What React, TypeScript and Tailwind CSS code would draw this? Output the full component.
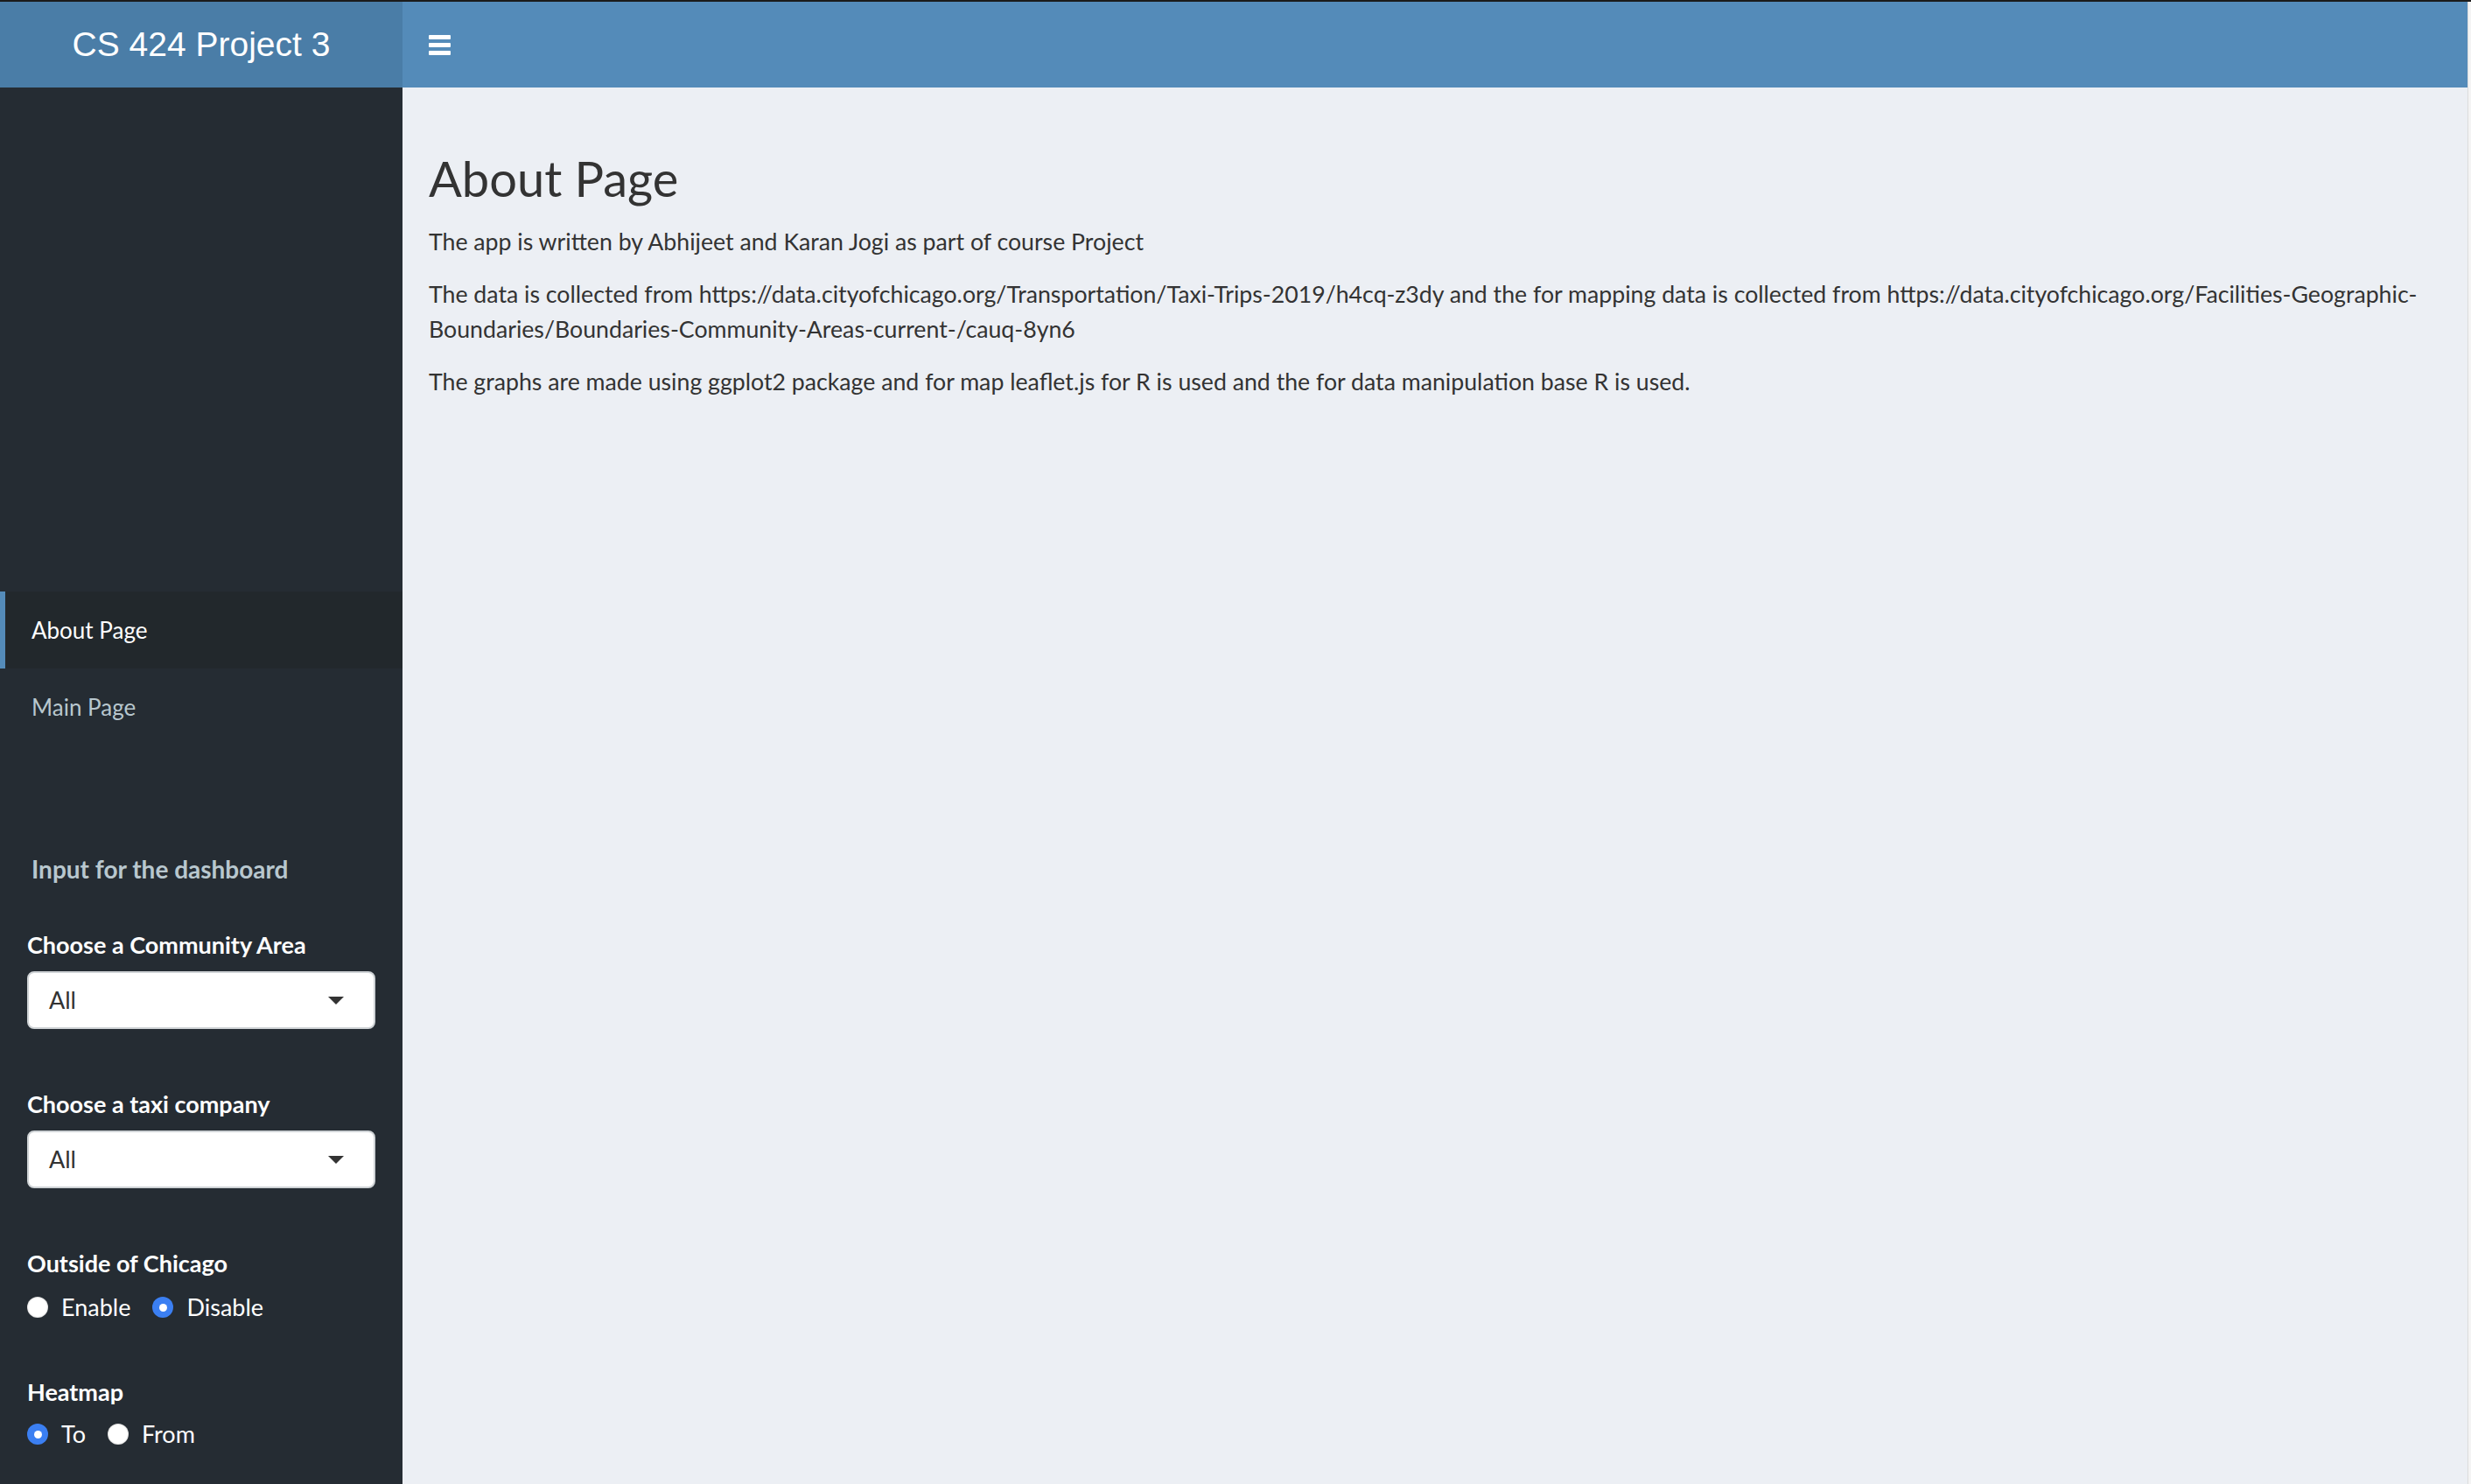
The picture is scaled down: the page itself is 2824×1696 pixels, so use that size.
import React, { useState } from 'react';

const SANS = "font-['Lato','Open_Sans',sans-serif]";

interface RadioOption {
  value: string;
  label: string;
}

const Radio: React.FC<{ checked: boolean; label: string; onClick: () => void }> = ({ checked, label, onClick }) => (
  <button onClick={onClick} className="flex items-center gap-[15px] mr-[25px] h-[40px]">
    {checked ? (
      <span className="w-[24px] h-[24px] rounded-full bg-[#3b7ff2] flex items-center justify-center">
        <span className="w-[9px] h-[9px] rounded-full bg-white" />
      </span>
    ) : (
      <span className="w-[24px] h-[24px] rounded-full bg-white shadow-[inset_0_0_2px_rgba(0,0,0,0.35)]" />
    )}
    <span className="text-[27px] text-white">{label}</span>
  </button>
);

const RadioGroup: React.FC<{ options: RadioOption[]; value: string; onChange: (v: string) => void }> = ({
  options,
  value,
  onChange
}) => (
  <div className="flex items-center">
    {options.map((o) => (
      <Radio key={o.value} checked={value === o.value} label={o.label} onClick={() => onChange(o.value)} />
    ))}
  </div>
);

const SelectBox: React.FC<{ value: string }> = ({ value }) => (
  <div className="w-[398px] h-[66px] bg-white border-2 border-[#cfd3d6] rounded-[8px] flex items-center justify-between pl-[23px] pr-[34px]">
    <span className="text-[27px] text-[#333]">{value}</span>
    <span className="w-0 h-0 border-l-[9px] border-r-[9px] border-t-[9px] border-l-transparent border-r-transparent border-t-[#333]" />
  </div>
);

const App: React.FC = () => {
  const [active, setActive] = useState<string>('about');
  const [outside, setOutside] = useState<string>('disable');
  const [heatmap, setHeatmap] = useState<string>('to');

  return (
    <div className={`w-full h-screen flex flex-col bg-[#1b1b1b] ${SANS}`}>
      <div className="h-[2px] shrink-0" />
      <div className="flex flex-1 min-h-0">
        <div className="flex-1 flex flex-col min-w-0">
          {/* header */}
          <div className="h-[98px] flex shrink-0">
            <div className="w-[460px] bg-[#4a7da7] flex items-center justify-center">
              <span className="font-['Liberation_Sans',Arial,sans-serif] text-[39px] text-white font-light">CS 424 Project 3</span>
            </div>
            <div className="flex-1 bg-[#548bb9] flex items-center pl-[30px]">
              <button aria-label="Toggle navigation" className="flex flex-col gap-[4px] w-[25px]">
                <span className="h-[5px] bg-white rounded-[1px]" />
                <span className="h-[5px] bg-white rounded-[1px]" />
                <span className="h-[5px] bg-white rounded-[1px]" />
              </button>
            </div>
          </div>

          <div className="flex flex-1 min-h-0">
            {/* sidebar */}
            <div className="w-[460px] bg-[#252c33] flex flex-col pt-[576px]">
              {[
                { id: 'about', label: 'About Page' },
                { id: 'main', label: 'Main Page' }
              ].map((item) => (
                <button
                  key={item.id}
                  onClick={() => setActive(item.id)}
                  className={`h-[88px] flex items-center pl-[30px] text-[26px] border-l-[6px] text-left ${
                    active === item.id
                      ? 'bg-[#22282c] border-[#548bb9] text-white'
                      : 'border-transparent text-[#b8c7ce]'
                  }`}
                >
                  {item.label}
                </button>
              ))}

              <div className="mt-[121px] pl-[36px] text-[28px] leading-[40px] font-bold text-[#b8c7ce]">
                Input for the dashboard
              </div>

              <div className="px-[31px]">
                <div className="mt-[47px] mb-[10px] text-[27px] leading-[40px] font-bold text-white">Choose a Community Area</div>
                <SelectBox value="All" />

                <div className="mt-[66px] mb-[10px] text-[27px] leading-[40px] font-bold text-white">Choose a taxi company</div>
                <SelectBox value="All" />

                <div className="mt-[66px] mb-[10px] text-[27px] leading-[40px] font-bold text-white">Outside of Chicago</div>
                <RadioGroup
                  options={[
                    { value: 'enable', label: 'Enable' },
                    { value: 'disable', label: 'Disable' }
                  ]}
                  value={outside}
                  onChange={setOutside}
                />

                <div className="mt-[57px] mb-[8px] text-[27px] leading-[40px] font-bold text-white">Heatmap</div>
                <RadioGroup
                  options={[
                    { value: 'to', label: 'To' },
                    { value: 'from', label: 'From' }
                  ]}
                  value={heatmap}
                  onChange={setHeatmap}
                />
              </div>
            </div>

            {/* content */}
            <div className="flex-1 bg-[#eceff4] pl-[30px] pr-[30px] pt-[71px] text-[#333]">
              <h2 className="text-[56px] leading-[66px] mb-[19px]">About Page</h2>
              <p className="text-[26.7px] leading-[40px] mb-[20px]">
                The app is written by Abhijeet and Karan Jogi as part of course Project
              </p>
              <p className="text-[26.7px] leading-[40px] mb-[20px]">
                The data is collected from https://data.cityofchicago.org/Transportation/Taxi-Trips-2019/h4cq-z3dy and the for mapping data is collected from https://data.cityofchicago.org/Facilities-Geographic-Boundaries/Boundaries-Community-Areas-current-/cauq-8yn6
              </p>
              <p className="text-[26.7px] leading-[40px] mb-[20px]">
                The graphs are made using ggplot2 package and for map leaflet.js for R is used and the for data manipulation base R is used.
              </p>
            </div>
          </div>
        </div>
        <div className="w-[4px] bg-[#f4f4f4] border-l border-[#dcdcdc] shrink-0" />
      </div>
    </div>
  );
};

export default App;
